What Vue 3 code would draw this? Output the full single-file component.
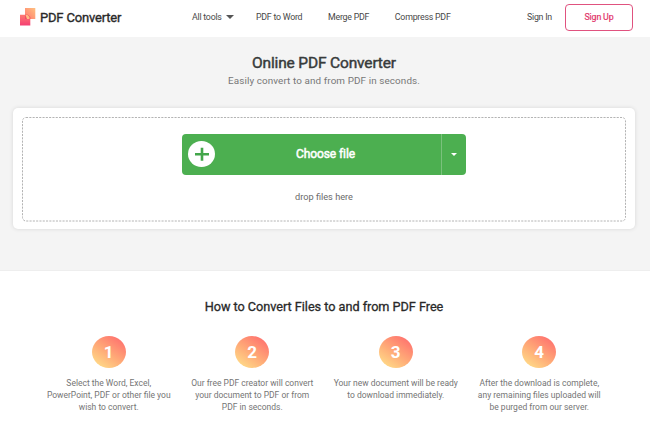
<script setup>
const links = ['PDF to Word', 'Merge PDF', 'Compress PDF']
const steps = [
  ['Select the Word, Excel,', 'PowerPoint, PDF or other file you', 'wish to convert.'],
  ['Our free PDF creator will convert', 'your document to PDF or from', 'PDF in seconds.'],
  ['Your new document will be ready', 'to download immediately.'],
  ['After the download is complete,', 'any remaining files uploaded will', 'be purged from our server.'],
]
</script>

<template>
  <div class="page">
    <header class="header">
      <a class="brand">
        <svg class="logo" width="16" height="18" viewBox="0 0 16 18">
          <defs>
            <linearGradient id="pink" x1="0" y1="0" x2="0" y2="1">
              <stop offset="0" stop-color="#ff7a72" />
              <stop offset="1" stop-color="#f43f72" />
            </linearGradient>
            <linearGradient id="orange" x1="0" y1="1" x2="1" y2="0">
              <stop offset="0" stop-color="#ff7970" />
              <stop offset="1" stop-color="#ffc180" />
            </linearGradient>
          </defs>
          <rect x="5" y="0" width="10.3" height="11" fill="url(#orange)" />
          <path d="M0 6.7H5V11H10.3V17.5H0Z" fill="url(#pink)" />
          <path d="M5 6.7H7.8L10.3 9V11H5Z" fill="#ef5262" />
          <path d="M5.5 7H7.5L9.5 9V11H7Z" fill="#ffbd83" />
        </svg>
        <span class="brand-name">PDF Converter</span>
      </a>
      <nav class="nav">
        <a class="tools">All tools
          <svg width="8" height="4" viewBox="0 0 8 4"><path d="M0 0H8L4 4Z" fill="#555" /></svg>
        </a>
        <a v-for="link in links" :key="link">{{ link }}</a>
      </nav>
      <a class="sign-in">Sign In</a>
      <button class="sign-up">Sign Up</button>
    </header>

    <main class="hero">
      <h1>Online PDF Converter</h1>
      <p class="subtitle">Easily convert to and from PDF in seconds.</p>
      <section class="card">
        <div class="dropzone">
          <svg class="outline" width="604" height="105" viewBox="0 0 604 105">
            <rect x=".5" y=".5" width="603" height="103.5" rx="3.5" fill="none" stroke="#b4b4b4" stroke-dasharray="2.1 1.2" />
          </svg>
          <div class="picker">
            <button class="choose">
              <svg class="plus" width="27" height="26" viewBox="0 0 27 26">
                <ellipse cx="13.5" cy="13" rx="13.5" ry="13" fill="#fff" />
                <path d="M7 13.3H21M14 6.8V19.8" stroke="#43a64a" stroke-width="2.6" />
              </svg>
              <span>Choose file</span>
            </button>
            <button class="more" aria-label="More sources">
              <svg width="6" height="3" viewBox="0 0 6 3"><path d="M0 0H6L3 3Z" fill="#fff" /></svg>
            </button>
          </div>
          <p class="hint">drop files here</p>
        </div>
      </section>
    </main>

    <section class="how">
      <h2>How to Convert Files to and from PDF Free</h2>
      <div class="steps">
        <article v-for="(lines, i) in steps" :key="i" class="step">
          <div class="number">{{ i + 1 }}</div>
          <p><span v-for="line in lines" :key="line">{{ line }}</span></p>
        </article>
      </div>
    </section>
  </div>
</template>

<style>
body { margin: 0; background: #fff; }
</style>

<style scoped>
* { box-sizing: border-box; }
.page { width: 650px; height: 430px; overflow: hidden; font-family: Roboto, "Liberation Sans", sans-serif; color: #333; background: #fff; white-space: nowrap; }
h1, h2, p { margin: 0; }
button { font: inherit; padding: 0; border: 0; background: none; }
.header { display: flex; align-items: center; height: 37px; padding: 0 17px 3px 20px; font-size: 8.8px; letter-spacing: -.23px; }
.brand { display: flex; align-items: center; width: 172px; gap: 4px; }
.brand-name { font-size: 13px; font-weight: 400; letter-spacing: -.18px; -webkit-text-stroke: .35px #292929; color: #292929; }
.nav { display: flex; gap: 25.7px; color: #484848; width: 335px; }
.tools { display: flex; align-items: center; gap: 4px; margin-right: -3.4px; }
.sign-in { width: 38px; color: #484848; }
.sign-up { width: 68px; height: 27px; border: 1px solid #e0527f; border-radius: 4px; color: #e23369; -webkit-text-stroke: .2px #e23369; letter-spacing: -.15px; }
.hero { height: 234px; background: #f4f4f4; padding: 16px 15px 0 13px; text-align: center; border-bottom: 1px solid #eee; }
h1 { font-size: 15.5px; line-height: 20px; font-weight: 400; letter-spacing: -.16px; -webkit-text-stroke: .45px #383b3b; color: #383b3b; }
.subtitle { font-size: 9.9px; line-height: 15px; letter-spacing: .1px; color: #777; }
.card { height: 121px; margin-top: 20px; padding: 8.5px 9px; background: #fff; border-radius: 5px; box-shadow: 0 0 4px rgba(0, 0, 0, .12); }
.dropzone { position: relative; height: 105px; padding-top: 17px; }
.outline { position: absolute; inset: 0; }
.picker { display: flex; width: 284px; height: 41px; margin: 0 auto; background: #4caf50; border-radius: 4px; }
.choose { display: flex; align-items: center; width: 259px; padding-left: 6px; color: #fff; font-size: 12px; font-weight: 400; letter-spacing: -.09px; -webkit-text-stroke: .5px #fff; }
.choose span { flex: 1; padding-right: 5px; }
.more { display: flex; align-items: center; justify-content: center; width: 25px; border-left: 1px solid #7ac17c; }
.hint { margin-top: 14px; font-size: 9.2px; line-height: 16px; color: #6a6a6a; }
.how { padding: 27px 39px 0 37px; text-align: center; }
h2 { font-size: 12.7px; line-height: 18px; font-weight: 400; letter-spacing: -.03px; -webkit-text-stroke: .3px #292929; color: #292929; }
.steps { display: grid; grid-template-columns: repeat(4, 1fr); margin-top: 20px; }
.step { display: flex; flex-direction: column; align-items: center; }
.number { width: 34px; height: 32px; border-radius: 50%; background: linear-gradient(35deg, #ffe18a 5%, #ffad78 45%, #ff716e 90%); color: #fff; font-size: 17px; line-height: 32px; font-weight: 700; }
.step p { margin-top: 9px; font-size: 8.5px; line-height: 12px; color: #757575; }
.step span { display: block; }
</style>
